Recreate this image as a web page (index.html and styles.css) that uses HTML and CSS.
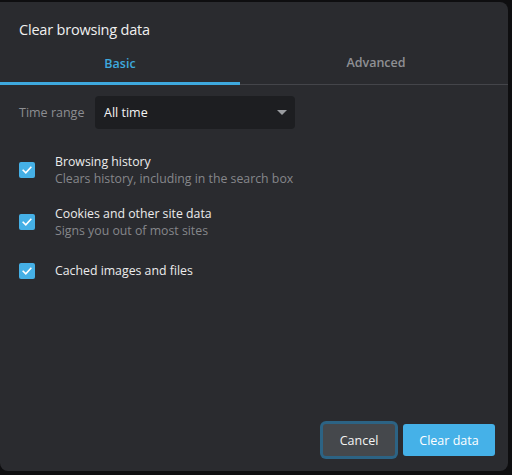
FILE: index.html
```html
<!DOCTYPE html>
<html lang="en">
<head>
<meta charset="utf-8">
<title>Clear browsing data</title>
<link rel="stylesheet" href="styles.css">
</head>
<body>
<div class="dialog">
  <div class="title">Clear browsing data</div>
  <div class="tabs">
    <div class="tab active">Basic</div>
    <div class="tab">Advanced</div>
  </div>
  <div class="range">
    <span class="range-label">Time range</span>
    <div class="select">
      <span>All time</span>
      <svg class="arrow" width="10" height="5" viewBox="0 0 10 5"><path d="M0 0H10L5 5Z" fill="#9a9ca0"/></svg>
    </div>
  </div>
  <div class="items">
    <div class="item item-1">
      <span class="box"><svg width="16" height="16" viewBox="0 0 16 16"><path d="M4.2 8.3L6.8 10.8L11.8 5.4" fill="none" stroke="#fff" stroke-width="1.6" stroke-linecap="square"/></svg></span>
      <div class="text">
        <div class="item-title">Browsing history</div>
        <div class="item-sub">Clears history, including in the search box</div>
      </div>
    </div>
    <div class="item item-2">
      <span class="box"><svg width="16" height="16" viewBox="0 0 16 16"><path d="M4.2 8.3L6.8 10.8L11.8 5.4" fill="none" stroke="#fff" stroke-width="1.6" stroke-linecap="square"/></svg></span>
      <div class="text">
        <div class="item-title">Cookies and other site data</div>
        <div class="item-sub">Signs you out of most sites</div>
      </div>
    </div>
    <div class="item item-3">
      <span class="box"><svg width="16" height="16" viewBox="0 0 16 16"><path d="M4.2 8.3L6.8 10.8L11.8 5.4" fill="none" stroke="#fff" stroke-width="1.6" stroke-linecap="square"/></svg></span>
      <div class="text">
        <div class="item-title">Cached images and files</div>
      </div>
    </div>
  </div>
  <div class="footer">
    <button class="btn btn-cancel">Cancel</button>
    <button class="btn btn-clear">Clear data</button>
  </div>
</div>
</body>
</html>
```
FILE: styles.css
```css
html, body {
  margin: 0;
  padding: 0;
  background: #0e0e10;
}
body {
  font-family: "Open Sans", "Noto Sans", "Liberation Sans", sans-serif;
  width: 512px;
  height: 475px;
  overflow: hidden;
}
.dialog {
  margin: 2px 4px 0 0;
  width: 508px;
  height: 469px;
  box-sizing: border-box;
  background: #2a2b2f;
  border-radius: 0 8px 8px 8px;
  display: flex;
  flex-direction: column;
}
.title {
  padding: 17px 19px 0;
  height: 22px;
  line-height: 22px;
  font-size: 14.5px;
  color: #f0f0f0;
  letter-spacing: -0.2px;
}
.tabs {
  display: flex;
  height: 43px;
  border-bottom: 1px solid #44454a;
}
.tab {
  flex: 1;
  display: flex;
  align-items: center;
  justify-content: center;
  font-size: 12.5px;
  font-weight: 600;
  color: #8f9094;
  box-sizing: border-box;
}
.tab.active {
  flex: 0 0 240px;
  color: #3ea9de;
  border-bottom: 3px solid #3ea9de;
  margin-bottom: -1px;
  padding-top: 3px;
}
.tab + .tab {
  padding: 0 0 1px 4px;
}
.range {
  display: flex;
  align-items: center;
  margin-top: 11px;
  padding-left: 19px;
}
.range-label {
  font-size: 12.5px;
  color: #8d8e92;
  width: 76px;
}
.select {
  width: 200px;
  height: 33px;
  box-sizing: border-box;
  background: #1d1e21;
  border-radius: 4px;
  display: flex;
  align-items: center;
  justify-content: space-between;
  padding: 0 8px 0 9px;
  font-size: 12.5px;
  color: #f4f4f4;
}
.arrow {
  display: block;
}
.items {
  margin-top: 24px;
  padding-left: 19px;
}
.item {
  display: flex;
  align-items: center;
  gap: 20px;
}
.item-1 {
  margin-bottom: 18px;
}
.item-3 {
  margin-top: 23px;
}
.box {
  width: 16px;
  height: 16px;
  border-radius: 2px;
  background: #45b0e6;
  display: block;
  flex: none;
}
.box svg {
  display: block;
}
.item-title {
  font-size: 12.3px;
  line-height: 17px;
  color: #ececec;
}
.item-sub {
  font-size: 12.3px;
  line-height: 17px;
  color: #86878b;
}
.footer {
  margin-top: auto;
  display: flex;
  justify-content: flex-end;
  gap: 8px;
  padding: 0 13px 15px 0;
}
.btn {
  height: 32px;
  border: none;
  border-radius: 3px;
  font-family: inherit;
  font-size: 12.5px;
  color: #f4f4f4;
  padding: 0;
}
.btn-cancel {
  width: 72px;
  background: #45484c;
  box-shadow: 0 0 0 3px #2c6384;
}
.btn-clear {
  width: 92px;
  background: #45b1e8;
  color: #ffffff;
}
```
